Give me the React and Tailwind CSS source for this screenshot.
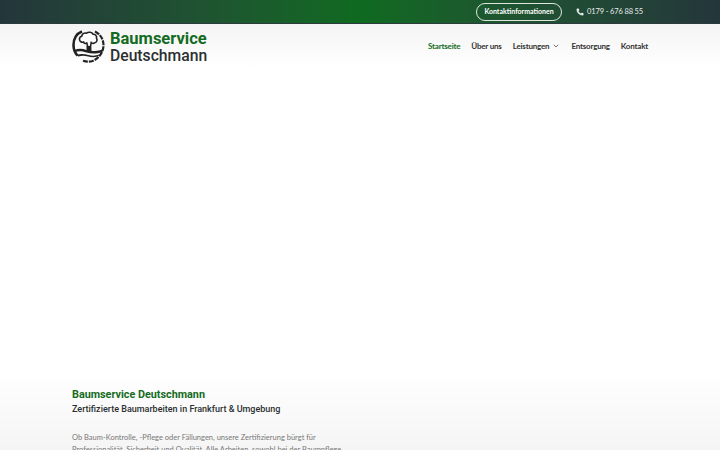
import React from 'react';
import { Phone, ChevronDown } from 'lucide-react';

const Logo = () => (
  <svg width="33" height="34" viewBox="0 0 33 34" fill="none" className="shrink-0">
    <path d="M10 2.500C4.500 4.500 1.500 10 1.500 16c0 4.500 1.500 8 4 10.500" stroke="#222" strokeWidth="2.600" />
    <path d="M23 2.500c5 2.500 8.500 7.500 8.500 13.500 0 7-4.500 13.500-11 16-3 1-6 1-9.500-.2" stroke="#222" strokeWidth="2.200" strokeDasharray="5 1" />
    <path d="M16 22c0-3-.2-5.500-1.200-8-1.300 1-3.300.3-3.300-1-1.800.6-3.800-.4-4-2.500-.2-1.700 1-3 2.300-3.300C10 5.200 12 3.500 14.500 4.200 16.500 2.700 20 3 21 5.200c2.300-.2 4 1.800 3.500 4 1.200 1.600.2 4.300-1.800 4.600-1.200.8-2.700.5-3.500-.3-.9 2.500-.8 5.500-.5 8.500z" stroke="#222" strokeWidth="1.600" fill="#fff" />
    <path d="M14.500 17h4v5h-4z" fill="#222" />
    <path d="M2.500 21c4-2 8-1.500 12 0s9 1.500 16-.5v2.500c-6 2-11 2-16 .5s-8-1.500-11.500-.5z" fill="#222" />
    <path d="M4.500 26c4-1.500 8-1 12 0s7 .8 11-.5l-1.500 2c-4 1-7 .8-10 0s-6-1-9.500 0z" fill="#222" />
  </svg>
);

const NavItem = ({ children, active }) => (
  <a className={`text-[8px] font-bold tracking-[-0.2px] ${active ? 'text-[#136b22]' : 'text-[#333]'}`}>{children}</a>
);

export default function App() {
  return (
    <div className="h-[450px] overflow-hidden flex flex-col bg-white font-['Lato',sans-serif]">
      <div className="h-6 shrink-0 flex items-center justify-end gap-[14px] pr-[77px] bg-gradient-to-r from-[#24363a] via-[#0f6a20] to-[#24363a] border-b border-b-[#2c3c3e]">
        <a className="h-[18px] w-[86px] flex items-center justify-center rounded-full border border-[#dfe6e0] text-[7px] font-bold text-white">Kontaktinformationen</a>
        <div className="flex items-center gap-[3px] text-[7.500px] tracking-[-0.15px] text-[#e8ecea]">
          <Phone size={8} fill="currentColor" strokeWidth={1} />
          <span>0179 - 676 88 55</span>
        </div>
      </div>

      <div className="h-[44px] shrink-0 flex items-center justify-between pl-[72px] pr-[72px] bg-gradient-to-b from-[#f4f4f4] to-white">
        <div className="flex items-center gap-[5px]">
          <Logo />
          <div className="font-['Roboto',sans-serif] leading-[17px] pt-[2px]">
            <div className="text-[#136b22] font-bold text-[16.500px]">Baumservice</div>
            <div className="text-[#2b2f30] font-medium text-[15.700px]">Deutschmann</div>
          </div>
        </div>
        <nav className="flex items-center gap-[11px]">
          <NavItem active>Startseite</NavItem>
          <NavItem>Über uns</NavItem>
          <div className="flex items-center gap-[3px]">
            <NavItem>Leistungen</NavItem>
            <ChevronDown size={8} className="text-[#333]" />
          </div>
          <NavItem>Entsorgung</NavItem>
          <NavItem>Kontakt</NavItem>
        </nav>
      </div>

      <div className="flex-1" />

      <div className="h-[80px] shrink-0 px-[72px] pt-[18px] bg-gradient-to-b from-white to-[#f5f5f5]">
        <h1 className="font-['Roboto',sans-serif] font-bold text-[10.800px] leading-[14px] text-[#136b22]">Baumservice Deutschmann</h1>
        <h2 className="font-['Roboto',sans-serif] font-medium text-[9px] leading-[13px] mt-[1px] text-[#2b2f30]">Zertifizierte Baumarbeiten in Frankfurt &amp; Umgebung</h2>
        <p className="w-[272px] mt-[16px] text-[7.500px] leading-[12px] text-[#777]">
          Ob Baum-Kontrolle, -Pflege oder Fällungen, unsere Zertifizierung bürgt für Professionalität, Sicherheit und Qualität. Alle Arbeiten, sowohl bei der Baumpflege
        </p>
      </div>
    </div>
  );
}
